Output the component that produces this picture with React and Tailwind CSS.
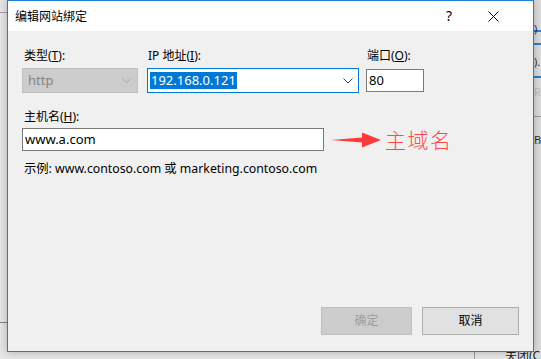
import React from "react";

const font = { fontFamily: '"Segoe UI", "Noto Sans", "Noto Sans CJK SC", sans-serif' };

export default function App() {
  return (
    <div
      className="relative w-[541px] h-[359px] overflow-hidden bg-[#e6e6e6] text-[12px] text-black"
      style={font}
    >
      {/* background window hints */}
      <div className="absolute left-0 top-[12px] w-[8px] h-px bg-[#a0a0a0]" />
      <div className="absolute left-0 top-[322px] w-[8px] h-px bg-[#808080]" />
      <div className="absolute left-[534px] top-0 w-[7px] h-[359px] bg-[#dcdcdc]">
        <div className="absolute left-0 top-[30px] w-full h-[2px] bg-[#2a7fd4]" />
        <div className="absolute left-0 top-[23px] text-[11px] leading-none text-[#333]">)</div>
        <div className="absolute left-0 top-[43px] w-full h-[2px] bg-[#2a7fd4]" />
        <div className="absolute left-0 top-[56px] text-[11px] leading-none text-[#333]">).</div>
        <div className="absolute left-0 top-[76px] w-full h-[2px] bg-[#2a7fd4]" />
        <div className="absolute left-0 top-[86px] text-[11px] leading-none text-[#bbb]">R</div>
        <div className="absolute left-0 top-[116px] w-full h-px bg-[#999]" />
        <div className="absolute left-0 top-[134px] text-[11px] leading-none text-[#223]">B</div>
        <div className="absolute left-0 top-[143px] w-full h-px bg-[#999]" />
      </div>
      <div className="absolute left-[474px] top-[352px] w-px h-[7px] bg-[#999]" />
      <div className="absolute left-[505px] top-[350px] text-[12px] leading-none text-[#222]">关闭(C</div>

      {/* dialog */}
      <div className="absolute left-[7px] top-0 w-[527px] h-[352px] border border-[#1c7fd6] bg-[#f0f0f0] flex flex-col shadow-[0_0_8px_rgba(0,0,0,0.25)]">
        <div className="h-[30px] bg-white flex items-center shrink-0">
          <div className="ml-[7px] text-[12px]" style={{ fontFamily: '"Noto Sans CJK SC", sans-serif' }}>编辑网站绑定</div>
          <div className="ml-auto mr-[36px] text-[14px] leading-none">?</div>
          <svg width="11" height="11" viewBox="0 0 11 11" className="mr-[34px]">
            <path d="M0.5 0.5 L10.5 10.5 M10.5 0.5 L0.5 10.5" stroke="#000" strokeWidth="1" />
          </svg>
        </div>

        <div className="flex-1 flex flex-col pl-[14px] pt-[17px] pb-[16px]">
          <div className="flex">
            <div className="w-[116px] flex flex-col">
              <div className="ml-[2px] h-[16px] leading-[16px]">类型(<span className="underline">T</span>):</div>
              <div className="mt-[4px] h-[25px] bg-[#cccccc] border border-[#bfbfbf] flex items-center pl-[5px] text-[#838383] text-[13px]">
                http
                <svg width="9" height="5" viewBox="0 0 9 5" className="ml-auto mr-[6px]">
                  <path d="M0.5 0.5 L4.5 4.5 L8.5 0.5" fill="none" stroke="#a8a8a8" />
                </svg>
              </div>
            </div>
            <div className="w-[212px] ml-[9px] flex flex-col">
              <div className="ml-[1px] h-[16px] leading-[16px]">IP 地址(<span className="underline">I</span>):</div>
              <div className="mt-[4px] h-[25px] bg-white border border-[#0078d7] flex items-center pl-[2px] text-[13px]">
                <span className="bg-[#0078d7] text-white px-[1px] leading-[17px]">192.168.0.121</span>
                <svg width="10" height="6" viewBox="0 0 10 6" className="ml-auto mr-[5px]">
                  <path d="M0.5 0.5 L5 5 L9.5 0.5" fill="none" stroke="#444" />
                </svg>
              </div>
            </div>
            <div className="w-[58px] ml-[7px] flex flex-col">
              <div className="ml-[1px] h-[16px] leading-[16px]">端口(<span className="underline">O</span>):</div>
              <div className="mt-[5px] h-[23px] bg-white border border-[#7a7a7a] flex items-center pl-[2px] text-[13px]">80</div>
            </div>
          </div>

          <div className="mt-[16px] ml-[2px] h-[16px] leading-[16px]">主机名(<span className="underline">H</span>):</div>
          <div className="flex items-center mt-[3px]">
            <div className="w-[302px] h-[23px] bg-white border border-[#7a7a7a] flex items-center pl-[2px] text-[13px]">www.a.com</div>
            <svg width="52" height="18" viewBox="0 0 52 18" className="ml-[7px]">
              <polygon points="0,9 31,6.5 31,1.5 50,9 31,16.5 31,11.5" fill="#ff3a3a" />
            </svg>
            <div
              className="ml-[2px] text-[21px] leading-none text-[#ff4848] tracking-[1.5px]"
              style={{ fontFamily: '"Noto Sans CJK SC", sans-serif', fontWeight: 300 }}
            >
              主域名
            </div>
          </div>
          <div className="mt-[10px] ml-[2px] h-[16px] leading-[16px] text-[12.3px]">示例: www.contoso.com 或 marketing.contoso.com</div>

          <div className="mt-auto flex justify-end pr-[14px]">
            <div className="w-[91px] h-[28px] bg-[#cccccc] border border-[#bfbfbf] flex items-center justify-center text-[#9e9e9e]">确定</div>
            <div className="w-[97px] h-[28px] ml-[10px] bg-[#e1e1e1] border border-[#adadad] flex items-center justify-center">取消</div>
          </div>
        </div>
      </div>
    </div>
  );
}
